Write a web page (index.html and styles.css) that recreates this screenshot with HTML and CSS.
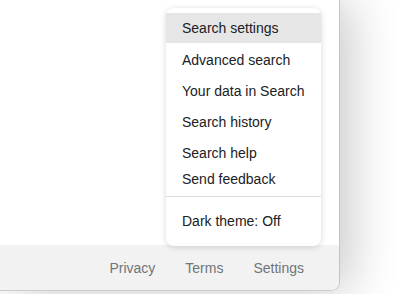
FILE: index.html
```html
<!DOCTYPE html>
<html>
<head>
<meta charset="utf-8">
<link rel="stylesheet" href="styles.css">
</head>
<body>
<div class="window">
  <div class="content"></div>
  <footer class="footer">
    <a class="link">Privacy</a>
    <a class="link">Terms</a>
    <a class="link">Settings</a>
  </footer>
  <div class="menu">
    <div class="item active">Search settings</div>
    <div class="item">Advanced search</div>
    <div class="item">Your data in Search</div>
    <div class="item">Search history</div>
    <div class="item">Search help</div>
    <div class="item short">Send feedback</div>
    <div class="divider"></div>
    <div class="item dark">Dark theme: Off</div>
  </div>
</div>
</body>
</html>
```
FILE: styles.css
```css
html, body {
  margin: 0;
  padding: 0;
  background: #ffffff;
  width: 396px;
  height: 294px;
  overflow: hidden;
  font-family: "Liberation Sans", Arial, sans-serif;
}
.window {
  position: relative;
  width: 340px;
  height: 291px;
  background: #ffffff;
  display: flex;
  flex-direction: column;
  border-right: 1px solid #c4c4c4;
  border-bottom: 1px solid #cccccc;
  border-bottom-right-radius: 9px;
  box-shadow: 10px 0 50px rgba(0, 0, 0, 0.22);
  box-sizing: border-box;
}
.content {
  flex: 1;
}
.footer {
  height: 45px;
  background: #f2f2f2;
  display: flex;
  align-items: center;
  justify-content: flex-end;
  gap: 30px;
  padding-right: 35px;
  border-bottom-right-radius: 8px;
  font-size: 14px;
  color: #70757a;
}
.link {
  color: #70757a;
  text-decoration: none;
}
.menu {
  position: absolute;
  left: 166px;
  top: 8px;
  width: 155px;
  height: 238px;
  box-sizing: border-box;
  padding-top: 5px;
  background: #ffffff;
  border-radius: 8px;
  box-shadow: 0 1px 6px rgba(0, 0, 0, 0.16);
  font-size: 14px;
  color: #202124;
}
.item {
  height: 31px;
  display: flex;
  align-items: center;
  padding-left: 16px;
}
.item.active {
  background: #e6e6e6;
  height: 30px;
  margin-bottom: 1px;
}
.item.short {
  height: 22px;
}
.divider {
  height: 1px;
  background: #dadce0;
  margin-top: 6px;
}
.item.dark {
  margin-top: 8px;
  height: 30px;
  padding-top: 2px;
  box-sizing: border-box;
}
```
